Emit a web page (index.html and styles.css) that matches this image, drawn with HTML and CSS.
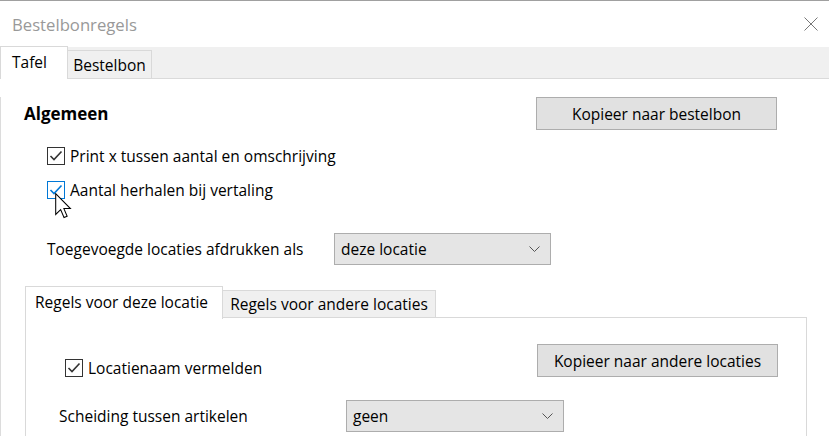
FILE: index.html
```html
<!DOCTYPE html>
<html lang="nl">
<head>
  <meta charset="UTF-8">
  <meta name="viewport" content="width=device-width, initial-scale=1.0">
  <title>Bestelbonregels</title>
  <link rel="stylesheet" href="styles.css">
</head>
<body>
  <div class="titlebar">
    <span class="title">Bestelbonregels</span>
    <svg class="close" width="14" height="14" viewBox="0 0 14 14">
      <path d="M0.5 0.5 L13.5 13.5 M13.5 0.5 L0.5 13.5" stroke="#777" stroke-width="1" fill="none"/>
    </svg>
  </div>

  <!-- Main tabs -->
  <div class="tabstrip">
    <div class="tab active tab-tafel">Tafel</div>
    <div class="tab tab-bestelbon">Bestelbon</div>
  </div>

  <div class="panel">
    <div class="head-row">
      <span class="heading">Algemeen</span>
      <div class="button btn-bestelbon">Kopieer naar bestelbon</div>
    </div>

    <label class="check check-first">
      <span class="box">
        <svg width="16" height="16" viewBox="0 0 16 16"><path d="M2.5 8 L6 11.5 L13.5 3.5" stroke="#333" stroke-width="1.6" fill="none"/></svg>
      </span>
      Print x tussen aantal en omschrijving
    </label>
    <label class="check check-second">
      <span class="box hover">
        <svg width="16" height="16" viewBox="0 0 16 16"><path d="M2.5 8 L6 11.5 L13.5 3.5" stroke="#0078d7" stroke-width="1.6" fill="none"/></svg>
      </span>
      Aantal herhalen bij vertaling
    </label>

    <div class="field-row field-main">
      <span class="field-label">Toegevoegde locaties afdrukken als</span>
      <div class="select select-main">
        <span>deze locatie</span>
        <svg width="11" height="7" viewBox="0 0 11 7"><path d="M0.5 0.5 L5.5 5.5 L10.5 0.5" stroke="#555" stroke-width="1" fill="none"/></svg>
      </div>
    </div>

    <!-- Inner tabs -->
    <div class="subtabs">
      <div class="subtab active sub-deze">Regels voor deze locatie</div>
      <div class="subtab sub-andere">Regels voor andere locaties</div>
    </div>
    <div class="subpanel">
      <div class="sub-row">
        <label class="check check-loc">
          <span class="box">
            <svg width="16" height="16" viewBox="0 0 16 16"><path d="M2.5 8 L6 11.5 L13.5 3.5" stroke="#333" stroke-width="1.6" fill="none"/></svg>
          </span>
          Locatienaam vermelden
        </label>
        <div class="button btn-andere">Kopieer naar andere locaties</div>
      </div>
      <div class="field-row field-sub">
        <span class="field-label">Scheiding tussen artikelen</span>
        <div class="select select-sub">
          <span>geen</span>
          <svg width="11" height="7" viewBox="0 0 11 7"><path d="M0.5 0.5 L5.5 5.5 L10.5 0.5" stroke="#555" stroke-width="1" fill="none"/></svg>
        </div>
      </div>
    </div>
  </div>

  <svg class="cursor" width="17" height="26" viewBox="0 0 13 20">
    <path d="M0.5 0.5 L0.5 16.5 L4.3 12.8 L6.9 18.9 L9.3 17.9 L6.8 12 L11.8 12 Z" fill="#fff" stroke="#000" stroke-width="0.8" stroke-linejoin="miter"/>
  </svg>
</body>
</html>
```

FILE: styles.css
```css
* {
  box-sizing: border-box;
}
body {
  margin: 0;
  width: 829px;
  height: 436px;
  overflow: hidden;
  position: relative;
  background: #fff;
  border-top: 1px solid #a0a0a0;
  font-family: "Open Sans", sans-serif;
  font-size: 15.5px;
  color: #000;
}
.titlebar {
  height: 46px;
  display: flex;
  align-items: center;
  justify-content: space-between;
  padding: 0 11px 0 12px;
}
.title {
  font-size: 16.7px;
  color: #999;
}
.close {
  display: block;
}

/* tabs */
.tabstrip {
  display: flex;
  align-items: flex-end;
  height: 32px;
  background: #f0f0f0;
  border-bottom: 1px solid #dadada;
}
.tab {
  height: 28px;
  display: flex;
  align-items: center;
  justify-content: center;
  border: 1px solid #d9d9d9;
  border-bottom: none;
  background: #f0f0f0;
}
.tab.active {
  height: 33px;
  margin-bottom: -1px;
  background: #fff;
  align-items: flex-start;
  justify-content: flex-start;
  padding: 4px 0 0 11px;
}
.tab-tafel {
  width: 68px;
}
.tab-bestelbon {
  width: 84px;
  border-left: none;
}

.panel {
  height: 357px;
  border-left: 1px solid #dcdcdc;
}
.head-row {
  display: flex;
  align-items: center;
  justify-content: space-between;
  margin-top: 18px;
  padding-left: 23px;
  padding-right: 52px;
}
.heading {
  font-weight: bold;
  font-size: 17px;
}
.button {
  height: 33px;
  display: flex;
  align-items: center;
  justify-content: center;
  background: #e1e1e1;
  border: 1px solid #adadad;
}
.btn-bestelbon {
  width: 241px;
}

/* checkboxes */
.check {
  display: flex;
  align-items: center;
  gap: 5px;
  height: 18px;
}
.box {
  width: 18px;
  height: 18px;
  border: 1px solid #333;
  background: #fff;
  display: flex;
  align-items: center;
  justify-content: center;
}
.box.hover {
  border-color: #0078d7;
}
.check-first {
  margin: 17px 0 0 46px;
}
.check-second {
  margin: 16px 0 0 46px;
}

/* label + dropdown */
.field-row {
  display: flex;
  align-items: center;
}
.field-label {
  width: 287px;
}
.field-main {
  margin: 34px 0 0 46px;
}
.select {
  height: 32px;
  display: flex;
  align-items: center;
  justify-content: space-between;
  padding: 0 10px 0 6px;
  background: #e5e5e5;
  border: 1px solid #adadad;
}
.select-main {
  width: 217px;
}
.select-sub {
  width: 218px;
}

/* inner tabs */
.subtabs {
  display: flex;
  align-items: flex-end;
  height: 31px;
  margin: 21px 0 0 24px;
}
.subtab {
  height: 27px;
  display: flex;
  align-items: center;
  justify-content: center;
  border: 1px solid #d9d9d9;
  border-bottom: none;
  background: #f0f0f0;
}
.subtab.active {
  height: 33px;
  margin-bottom: -2px;
  background: #fff;
  align-items: flex-start;
  justify-content: flex-start;
  padding: 4px 0 0 9px;
}
.sub-deze {
  width: 198px;
}
.sub-andere {
  width: 213px;
  border-left: none;
}
.subpanel {
  margin-left: 24px;
  width: 782px;
  height: 130px;
  border: 1px solid #d9d9d9;
  border-bottom: none;
}
.sub-row {
  display: flex;
  align-items: flex-end;
  justify-content: space-between;
  margin-top: 26px;
  padding-left: 39px;
  padding-right: 28px;
}
.check-loc {
  margin-bottom: 0;
}
.btn-andere {
  width: 241px;
}
.field-sub {
  margin: 23px 0 0 33px;
}

.cursor {
  position: absolute;
  left: 55px;
  top: 192px;
}
```
